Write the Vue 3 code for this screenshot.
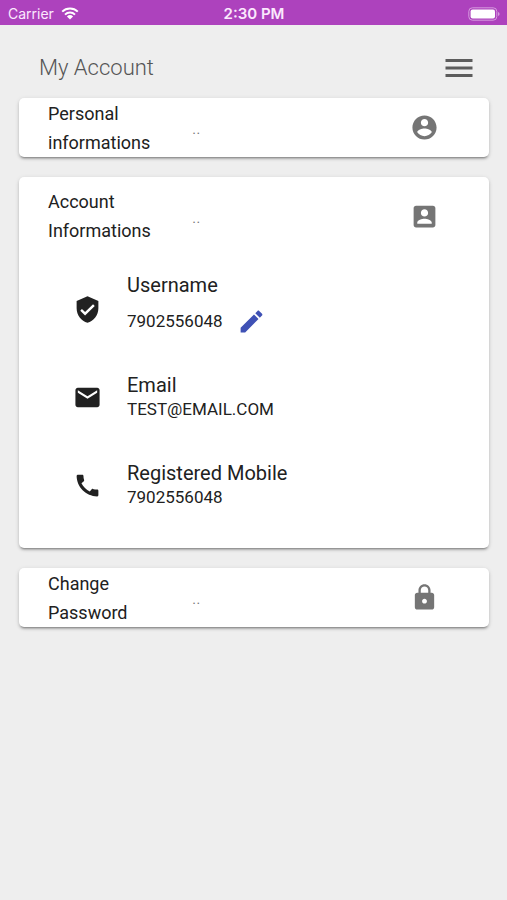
<script setup>
const icons = {
  menu: 'M3 18h18v-2H3v2zm0-5h18v-2H3v2zm0-7v2h18V6H3z',
  accountCircle:
    'M12 2C6.48 2 2 6.48 2 12s4.48 10 10 10 10-4.48 10-10S17.52 2 12 2zm0 3c1.66 0 3 1.34 3 3s-1.34 3-3 3-3-1.34-3-3 1.34-3 3-3zm0 14.2c-2.5 0-4.71-1.28-6-3.22.03-1.99 4-3.08 6-3.08 1.99 0 5.97 1.09 6 3.08-1.29 1.94-3.5 3.22-6 3.22z',
  accountBox:
    'M3 5v14c0 1.1.89 2 2 2h14c1.1 0 2-.9 2-2V5c0-1.1-.9-2-2-2H5c-1.11 0-2 .9-2 2zm12 4c0 1.66-1.34 3-3 3s-3-1.34-3-3 1.34-3 3-3 3 1.34 3 3zm-9 8c0-2 4-3.1 6-3.1s6 1.1 6 3.1v1H6v-1z',
  lock:
    'M18 8h-1V6c0-2.76-2.24-5-5-5S7 3.24 7 6v2H6c-1.1 0-2 .9-2 2v10c0 1.1.9 2 2 2h12c1.1 0 2-.9 2-2V10c0-1.1-.9-2-2-2zm-6 9c-1.1 0-2-.9-2-2s.9-2 2-2 2 .9 2 2-.9 2-2 2zm3.1-9H8.9V6c0-1.71 1.39-3.1 3.1-3.1 1.71 0 3.1 1.39 3.1 3.1v2z',
  verified:
    'M12 1L3 5v6c0 5.55 3.84 10.74 9 12 5.16-1.26 9-6.45 9-12V5l-9-4zm-2 16l-4-4 1.41-1.41L10 14.17l6.59-6.59L18 9l-8 8z',
  mail:
    'M20 4H4c-1.1 0-1.99.9-1.99 2L2 18c0 1.1.9 2 2 2h16c1.1 0 2-.9 2-2V6c0-1.1-.9-2-2-2zm0 4l-8 5-8-5V6l8 5 8-5v2z',
  phone:
    'M20.01 15.38c-1.23 0-2.42-.2-3.53-.56-.35-.12-.74-.03-1.01.24l-1.57 1.97c-2.83-1.35-5.48-3.9-6.89-6.83l1.95-1.66c.27-.28.35-.67.24-1.02-.37-1.11-.56-2.3-.56-3.53 0-.54-.45-.99-.99-.99H4.19C3.65 3 3 3.24 3 3.99 3 13.28 10.73 21 20.01 21c.71 0 .99-.63.99-1.18v-3.45c0-.54-.45-.99-.99-.99z',
  edit:
    'M3 17.25V21h3.75L17.81 9.94l-3.75-3.75L3 17.25zM20.71 7.04c.39-.39.39-1.02 0-1.41l-2.34-2.34c-.39-.39-1.02-.39-1.41 0l-1.83 1.83 3.75 3.75 1.83-1.83z',
}

const panels = [
  { title: 'Personal informations', icon: icons.accountCircle },
  {
    title: 'Account Informations',
    icon: icons.accountBox,
    rows: [
      { label: 'Username', value: '7902556048', icon: icons.verified, editable: true },
      { label: 'Email', value: 'TEST@EMAIL.COM', icon: icons.mail },
      { label: 'Registered Mobile', value: '7902556048', icon: icons.phone },
    ],
  },
  { title: 'Change Password', icon: icons.lock },
]
</script>

<template>
  <div class="screen">
    <div class="status">
      <div class="carrier">
        <span>Carrier</span>
        <svg class="wifi" viewBox="0 0 18 13" aria-hidden="true">
          <path d="M1.2 4.6a11.2 11.2 0 0 1 15.6 0M4 7.6a7.2 7.2 0 0 1 10 0" />
          <path class="dot" d="M9 12.6 5.9 9.5a4.5 4.5 0 0 1 6.2 0z" />
        </svg>
      </div>
      <span class="time">2:30 PM</span>
      <svg class="battery" viewBox="0 0 32 14" aria-hidden="true">
        <rect class="shell" x="0.8" y="0.8" width="28" height="12.4" rx="3.6" />
        <rect class="charge" x="2.6" y="2.6" width="24.4" height="8.8" rx="2" />
        <path class="tip" d="M30 5v4q1.6-.5 1.6-2T30 5z" />
      </svg>
    </div>

    <header class="topbar">
      <h1>My Account</h1>
      <button class="menu" type="button" aria-label="Menu">
        <svg viewBox="0 0 24 24" aria-hidden="true"><path :d="icons.menu" /></svg>
      </button>
    </header>

    <main class="panels">
      <section v-for="panel in panels" :key="panel.title" class="panel">
        <button class="panel-head" :class="{ open: panel.rows }" type="button" :aria-expanded="!!panel.rows">
          <span class="title">{{ panel.title }}</span>
          <span class="desc">..</span>
          <svg class="icon" viewBox="0 0 24 24" aria-hidden="true"><path :d="panel.icon" /></svg>
        </button>
        <ul v-if="panel.rows" class="rows">
          <li v-for="row in panel.rows" :key="row.label" class="row">
            <svg class="icon" viewBox="0 0 24 24" aria-hidden="true"><path :d="row.icon" /></svg>
            <div>
              <div class="label">{{ row.label }}</div>
              <div class="value">
                <span>{{ row.value }}</span>
                <button v-if="row.editable" class="edit" type="button" aria-label="Edit username">
                  <svg class="icon" viewBox="0 0 24 24" aria-hidden="true"><path :d="icons.edit" /></svg>
                </button>
              </div>
            </div>
          </li>
        </ul>
      </section>
    </main>
  </div>
</template>

<style>
body {
  margin: 0;
  background: #eeeeee;
}
</style>

<style scoped>
.screen {
  min-height: 100vh;
  background: #eeeeee;
  color: #212121;
  font-family: Roboto, "Liberation Sans", sans-serif;
}
button {
  margin: 0;
  padding: 0;
  border: 0;
  background: none;
  color: inherit;
  font: inherit;
  text-align: left;
  cursor: pointer;
}
.icon {
  display: block;
  flex: none;
  width: 29px;
  height: 29px;
  fill: currentColor;
}
.status {
  display: grid;
  grid-template-columns: 1fr auto 1fr;
  align-items: center;
  height: 25px;
  padding: 2px 7px 0 8px;
  box-sizing: border-box;
  background: #ad42bd;
  color: #fbe9fd;
  font-family: Inter, Roboto, sans-serif;
  font-size: 14px;
  line-height: 20px;
}
.carrier {
  display: flex;
  align-items: center;
  gap: 7px;
}
.wifi {
  width: 18px;
  height: 13px;
  fill: none;
  stroke: #ffffff;
  stroke-width: 2;
}
.wifi .dot {
  fill: #ffffff;
  stroke: none;
}
.time {
  font-size: 15px;
  font-weight: 600;
}
.battery {
  justify-self: end;
  width: 32px;
  height: 14px;
}
.shell {
  fill: none;
  stroke: #d59bde;
  stroke-width: 1;
}
.charge {
  fill: #ffffff;
}
.tip {
  fill: #d59bde;
}
.topbar {
  display: flex;
  align-items: center;
  justify-content: space-between;
  height: 73px;
  padding: 13px 30px 0 39px;
  box-sizing: border-box;
}
h1 {
  margin: 0;
  color: #555555;
  font-size: 22px;
  font-weight: 300;
  line-height: 32px;
}
.menu svg {
  display: block;
  width: 36px;
  height: 36px;
  fill: #5c5c5c;
}
.panels {
  display: flex;
  flex-direction: column;
  gap: 20px;
  padding: 0 18px 20px 19px;
}
.panel {
  border-radius: 5px;
  background: #ffffff;
  box-shadow: 0 3px 2px -2px rgba(0, 0, 0, 0.3), 0 2px 3px rgba(0, 0, 0, 0.16), 0 1px 5px rgba(0, 0, 0, 0.1);
}
.panel-head {
  display: grid;
  grid-template-columns: 124px 1fr auto;
  column-gap: 20px;
  align-items: center;
  width: 100%;
  min-height: 59px;
  padding: 0 50px 0 29px;
  font-size: 18px;
  line-height: 29px;
}
.panel-head.open {
  min-height: 78px;
}
.title {
  max-width: 110px;
}
.desc,
.panel-head .icon {
  color: #757575;
}
.desc {
  font-weight: 300;
}
.rows {
  margin: 0;
  padding: 10px 20px 19px 54px;
  list-style: none;
}
.row {
  display: flex;
  align-items: center;
  gap: 25px;
  min-height: 88px;
}
.label {
  font-size: 20px;
  line-height: 24px;
}
.value {
  display: flex;
  align-items: center;
  gap: 4px;
  font-size: 17px;
  line-height: 24px;
}
.edit {
  display: grid;
  place-items: center;
  width: 49px;
  height: 49px;
  color: #3f51b5;
}
</style>
